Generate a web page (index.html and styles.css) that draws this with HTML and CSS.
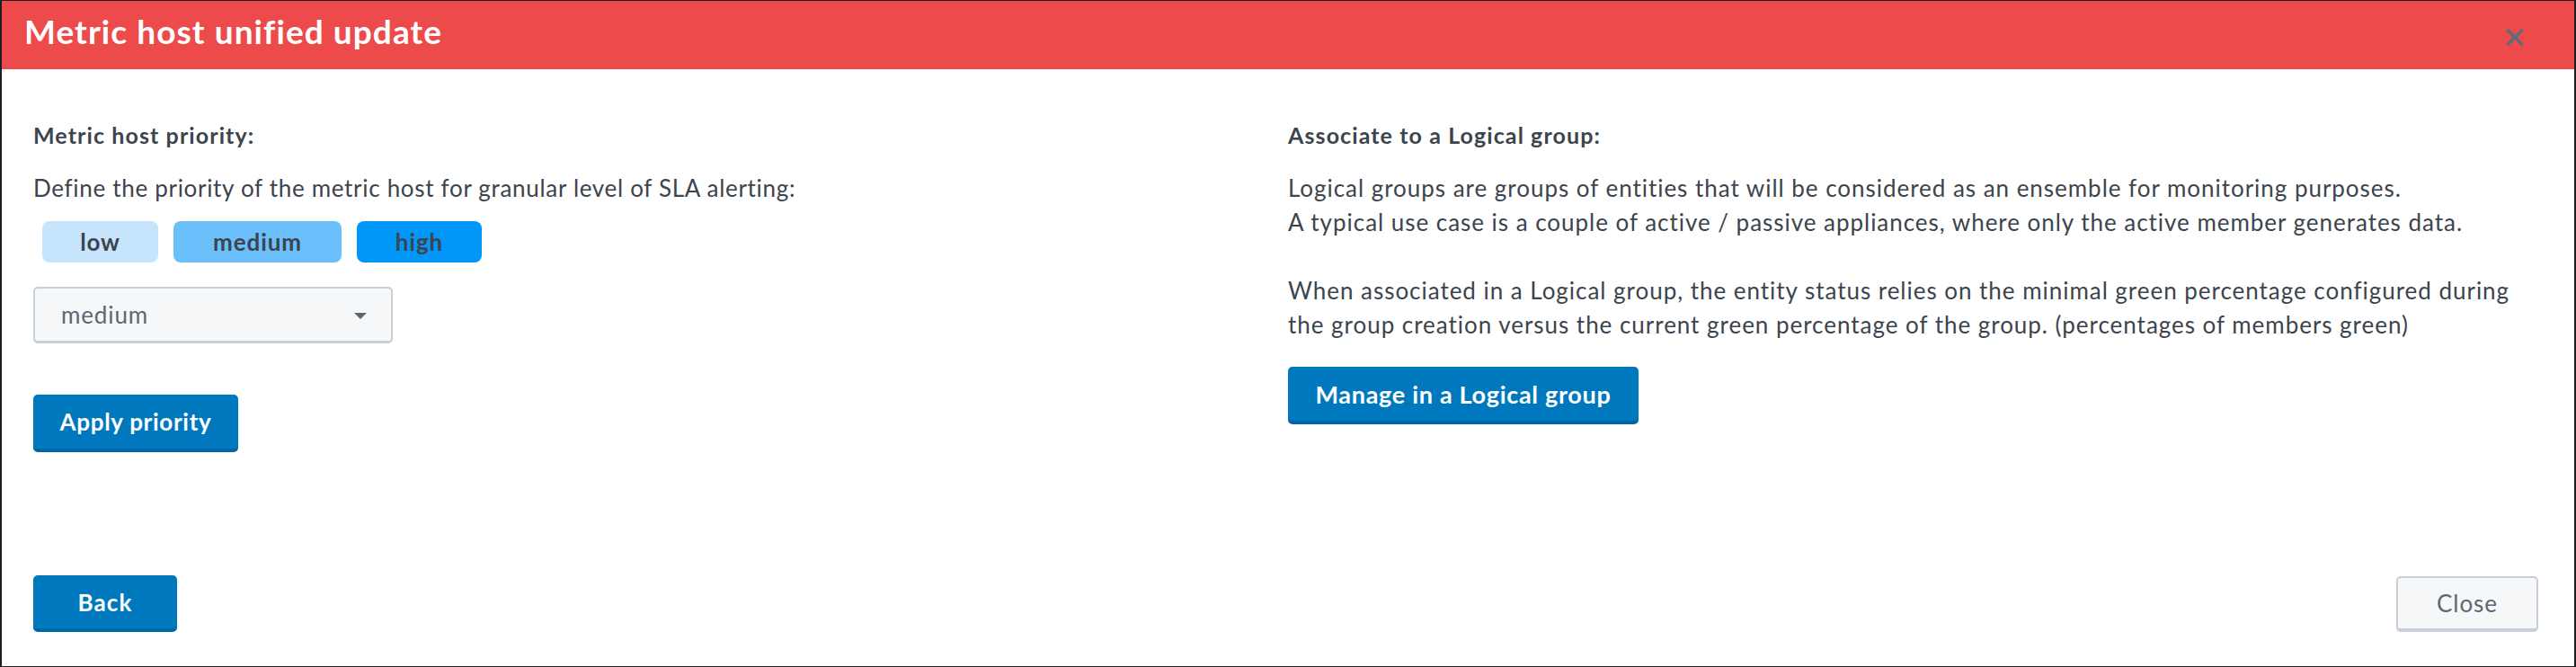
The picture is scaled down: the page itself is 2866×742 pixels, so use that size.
FILE: index.html
```html
<!DOCTYPE html>
<html lang="en">
<head>
<meta charset="utf-8">
<title>Metric host unified update</title>
<link rel="stylesheet" href="styles.css">
</head>
<body>
<div class="modal">
  <header class="modal-header">
    <h1 class="modal-title">Metric host unified update</h1>
    <button class="modal-x" aria-label="Close">
      <svg width="20" height="21" viewBox="0 0 20 21"><path d="M2.5 3 L17.5 18 M17.5 3 L2.5 18" stroke="#5b6c7b" stroke-width="3.4" stroke-linecap="round" fill="none"/></svg>
    </button>
  </header>
  <main class="modal-body">
    <section class="col">
      <h2 class="col-title">Metric host priority:</h2>
      <p class="text">Define the priority of the metric host for granular level of SLA alerting:</p>
      <div class="pills">
        <span class="pill pill-low">low</span>
        <span class="pill pill-medium">medium</span>
        <span class="pill pill-high">high</span>
      </div>
      <div class="select">
        <span class="select-value">medium</span>
        <span class="caret"></span>
      </div>
      <button class="btn btn-primary btn-apply">Apply priority</button>
    </section>
    <section class="col">
      <h2 class="col-title">Associate to a Logical group:</h2>
      <p class="text text-wide">Logical groups are groups of entities that will be considered as an ensemble for monitoring purposes.<br>A typical use case is a couple of active / passive appliances, where only the active member generates data.<br><br>When associated in a Logical group, the entity status relies on the minimal green percentage configured during<br>the group creation versus the current green percentage of the group. (percentages of members green)</p>
      <button class="btn btn-primary btn-manage">Manage in a Logical group</button>
    </section>
  </main>
  <footer class="modal-footer">
    <button class="btn btn-primary btn-back">Back</button>
    <button class="btn btn-secondary btn-close">Close</button>
  </footer>
</div>
</body>
</html>
```
FILE: styles.css
```css
* { box-sizing: border-box; }
html, body { margin: 0; padding: 0; background: #fff; }
body { font-family: Lato, "Noto Sans", "Liberation Sans", sans-serif; color: #3c444d; }

.modal {
  height: 742px;
  display: flex;
  flex-direction: column;
  border-style: solid;
  border-color: #1d1e20;
  border-width: 1px 2px 1px 2px;
  background: #fff;
}

.modal-header {
  background: #ec4a4b;
  height: 76px;
  padding: 12px 56px 0 25px;
  display: flex;
  justify-content: space-between;
  align-items: flex-start;
}
.modal-title {
  margin: 0;
  font-size: 37px;
  line-height: 44px;
  letter-spacing: 1.07px;
  font-weight: 700;
  color: #fff;
}
.modal-x {
  border: 0;
  background: none;
  padding: 0;
  margin-top: 18px;
  width: 20px;
  height: 21px;
  display: block;
}
.modal-x svg { display: block; }

.modal-body {
  flex: 1;
  display: grid;
  grid-template-columns: 1fr 1fr;
  padding: 58px 35px 0 35px;
}
.col { display: flex; flex-direction: column; align-items: flex-start; }
.col-title {
  margin: 0;
  font-size: 25px;
  line-height: 30px;
  letter-spacing: 1.1px;
  font-weight: 700;
}
.text {
  margin: 25px 0 0;
  font-size: 26px;
  line-height: 38px;
  letter-spacing: 0.69px;
}
.text-wide { letter-spacing: 0.97px; }

.pills { display: flex; gap: 17px; margin: 18px 0 0 10px; }
.pill {
  height: 46px;
  border-radius: 8px;
  display: flex;
  align-items: center;
  justify-content: center;
  font-size: 26px;
  letter-spacing: 0.9px;
  font-weight: 700;
  color: #3c444d;
}
.pill-low { width: 129px; background: #c6e5fc; }
.pill-medium { width: 187px; background: #6bc0fc; }
.pill-high { width: 139px; background: #0097f9; }

.select {
  margin-top: 27px;
  width: 400px;
  height: 63px;
  background: #f6f7f9;
  border: 2px solid #c7cfd8;
  border-bottom-width: 3px;
  border-radius: 5px;
  display: flex;
  align-items: center;
  justify-content: space-between;
  padding: 0 27px 0 29px;
}
.select-value { font-size: 26px; letter-spacing: 0.87px; color: #5c6773; }
.caret {
  width: 0; height: 0;
  border-left: 7px solid transparent;
  border-right: 7px solid transparent;
  border-top: 7px solid #5c6773;
  margin-top: 2px;
}

.btn {
  font-family: inherit;
  font-size: 26px;
  letter-spacing: 0.7px;
  border-radius: 5px;
  cursor: pointer;
  padding: 0;
}
.btn-primary {
  background: #0078be;
  color: #fff;
  font-weight: 700;
  border: 0;
  border-bottom: 4px solid #0067a6;
}
.btn-secondary {
  background: #f6f7f9;
  color: #5c6773;
  font-weight: 400;
  border: 2px solid #c7cfd8;
  border-bottom-width: 4px;
}
.btn-apply { margin-top: 57px; width: 228px; height: 64px; }
.btn-manage { margin-top: 28px; width: 390px; height: 64px; font-size: 27px; }

.modal-footer {
  display: flex;
  justify-content: space-between;
  align-items: flex-end;
  padding: 0 40px 38px 35px;
}
.btn-back { width: 160px; height: 63px; letter-spacing: 1.1px; }
.btn-close { width: 158px; height: 62px; letter-spacing: 0.95px; }
```
